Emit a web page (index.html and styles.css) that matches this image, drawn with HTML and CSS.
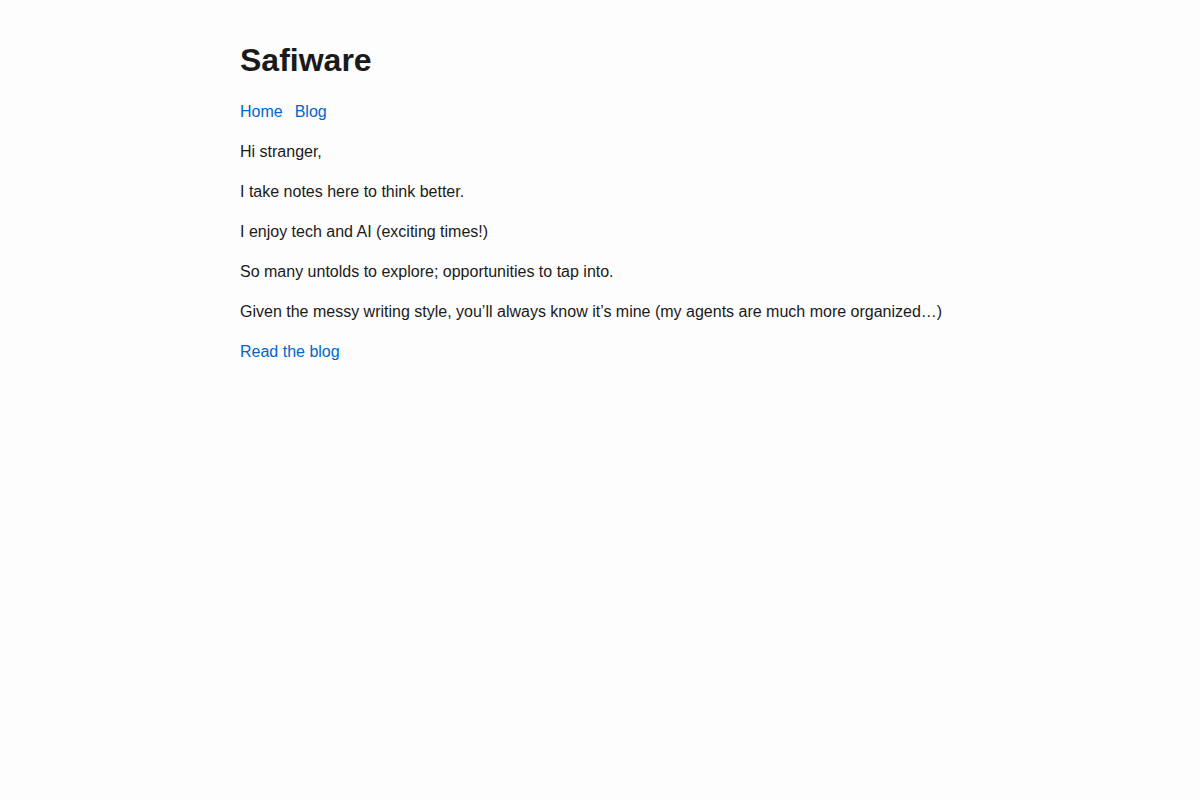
FILE: index.html
```html
<!DOCTYPE html>
<html lang="en">
<head>
    <meta charset="UTF-8">
    <meta name="viewport" content="width=device-width, initial-scale=1.0">
    <title>Safiware</title>
    <link rel="stylesheet" href="styles.css">
</head>
<body>

    <div class="container">
        <h1>Safiware</h1>
        <nav class="nav">
            <a href="/">Home</a>
            <a href="/blog">Blog</a>
        </nav>

        <p>Hi stranger,</p>
        <p>I take notes here to think better.</p>
        <p>I enjoy tech and AI (exciting times!)</p>
        <p>So many untolds to explore; opportunities to tap into.</p>
        <p>Given the messy writing style, you’ll always know it’s mine (my agents are much more organized…)</p>
        <p><a href="/blog">Read the blog</a></p>
    </div>

</body>
</html>
```

FILE: styles.css
```css
body {
    font-family: "Liberation Sans", Arial, sans-serif;
    font-size: 16px;
    line-height: 24px;
    color: #1a1a1a;
    background-color: #fdfdfd;
    margin: 0;
}

.container {
    max-width: 720px;
    margin: 0 auto;
    padding: 40px 0;
}

h1 {
    font-size: 32px;
    line-height: 40px;
    margin: 0 0 20px;
}

.nav {
    display: flex;
    gap: 12px;
    margin-bottom: 16px;
}

a {
    color: #0066cc;
    text-decoration: none;
}

p {
    margin: 0 0 16px;
}
```
